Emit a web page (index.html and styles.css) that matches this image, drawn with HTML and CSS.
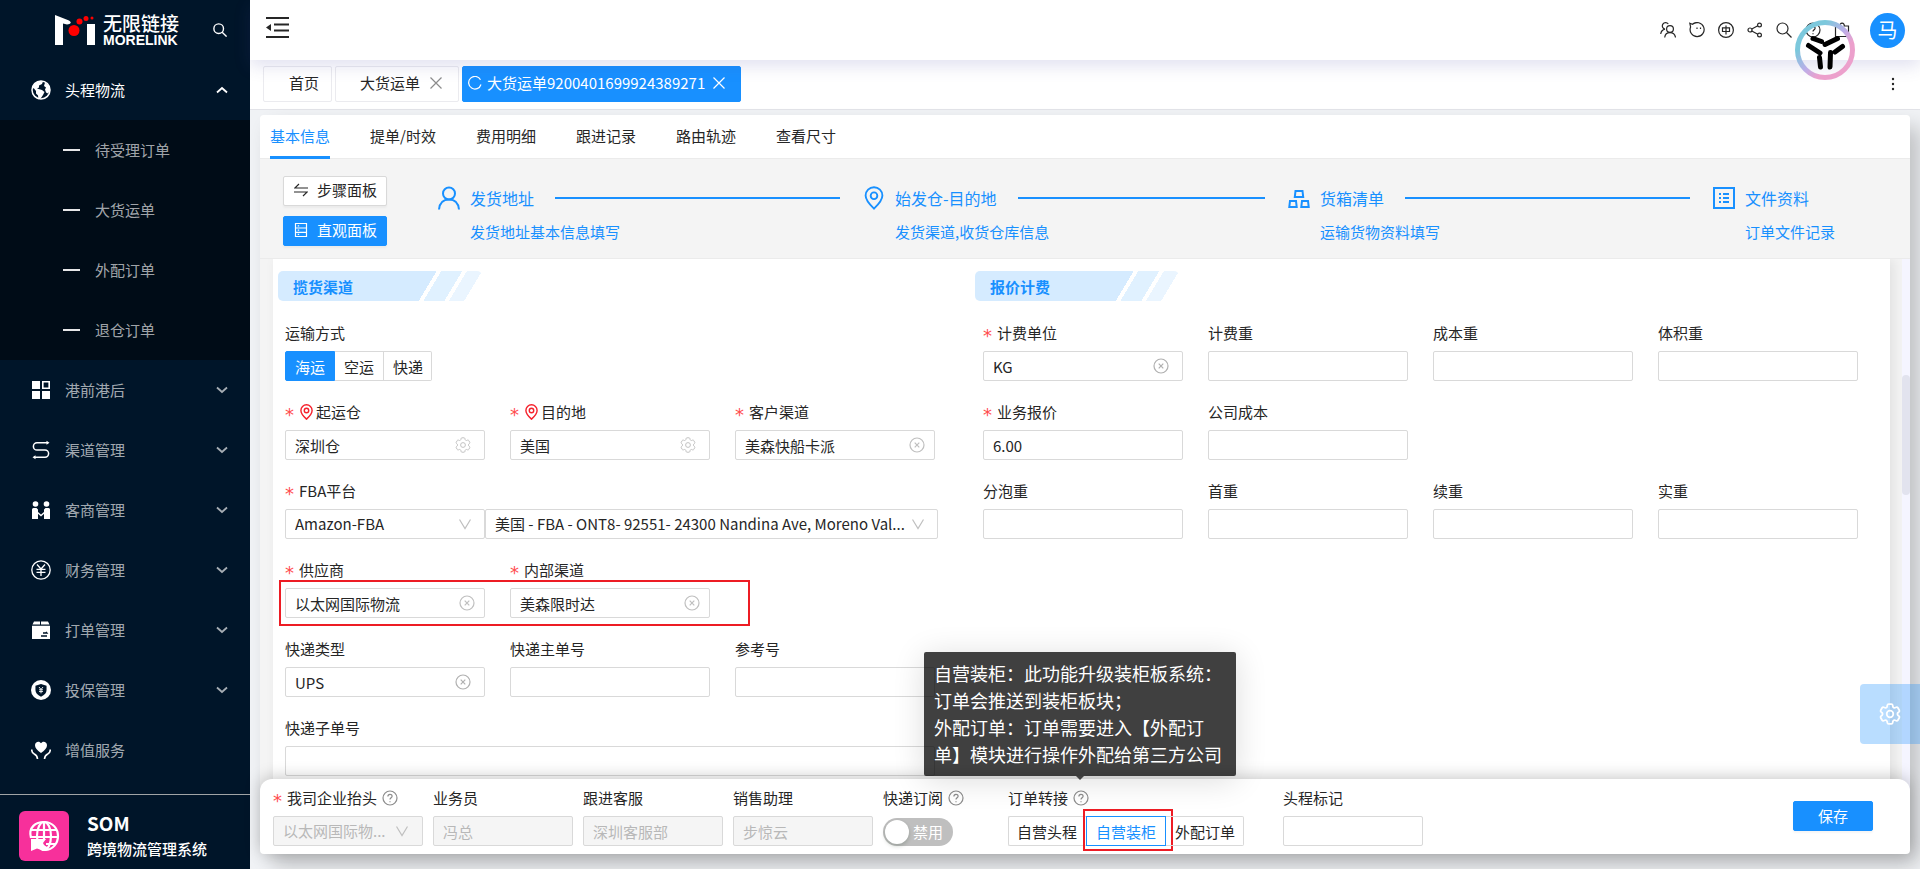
FILE: index.html
```html
<!DOCTYPE html>
<html lang="zh-CN">
<head>
<meta charset="utf-8">
<title>大货运单</title>
<link rel="stylesheet" href="styles.css">
</head>
<body>
<svg class="sprite" aria-hidden="true">
  <symbol id="i-search" viewBox="0 0 16 16"><circle cx="6.5" cy="6.5" r="5.5"/><path d="M10.500 10.500 15.500 15.500"/></symbol>
  <symbol id="i-chevron" viewBox="0 0 12 12"><path d="M1 3.500 6 8l5-4.500"/></symbol>
  <symbol id="i-vee" viewBox="0 0 12 12"><path d="M.500 1.500 6 10.500l5.500-9"/></symbol>
  <symbol id="i-clear" viewBox="0 0 16 16"><circle cx="8" cy="8" r="7"/><path d="m5.7 5.7 4.6 4.6m0-4.6-4.6 4.6"/></symbol>
  <symbol id="i-help" viewBox="0 0 16 16"><circle cx="8" cy="8" r="7"/><path d="M5.9 6.5C5.9 3.6 10.1 3.7 10.1 6.3 10.1 7.8 8 7.9 8 9.6"/><path d="M8 11.2v1"/></symbol>
  <symbol id="i-pin" viewBox="0 0 16 18"><path d="M8 17C5 14.200 1.700 11 1.700 7.200a6.300 6.300 0 0 1 12.600 0C14.300 11 11 14.200 8 17z"/><circle cx="8" cy="7.300" r="2.500"/></symbol>
  <symbol id="i-x" viewBox="0 0 12 12"><path d="m.500.500 11 11M11.500.500l-11 11"/></symbol>
  <symbol id="i-gear" viewBox="2 2 20 20"><path d="M9.594 3.94c.09-.542.56-.94 1.11-.94h2.593c.55 0 1.02.398 1.11.94l.213 1.281c.063.374.313.686.645.87.074.04.147.083.22.127.324.196.72.257 1.075.124l1.217-.456a1.125 1.125 0 011.37.49l1.296 2.247a1.125 1.125 0 01-.26 1.431l-1.003.827c-.293.24-.438.613-.431.992a6.759 6.759 0 010 .255c-.007.378.138.75.43.99l1.005.828c.424.35.534.954.26 1.43l-1.298 2.247a1.125 1.125 0 01-1.369.491l-1.217-.456c-.355-.133-.75-.072-1.076.124a6.57 6.57 0 01-.22.128c-.331.183-.581.495-.644.869l-.213 1.28c-.09.543-.56.941-1.11.941h-2.594c-.55 0-1.02-.398-1.11-.94l-.213-1.281c-.062-.374-.312-.686-.644-.87a6.52 6.52 0 01-.22-.127c-.325-.196-.72-.257-1.076-.124l-1.217.456a1.125 1.125 0 01-1.369-.49l-1.297-2.247a1.125 1.125 0 01.26-1.431l1.004-.827c.292-.24.437-.613.43-.992a6.932 6.932 0 010-.255c.007-.378-.138-.75-.43-.99l-1.004-.828a1.125 1.125 0 01-.26-1.43l1.297-2.247a1.125 1.125 0 011.37-.491l1.216.456c.356.133.751.072 1.076-.124.072-.044.146-.087.22-.128.332-.183.582-.495.644-.869l.214-1.281z"/><circle cx="12" cy="12" r="3"/></symbol>
</svg>

<aside class="sidebar">
  <div class="brand">
    <svg class="brand-mark" viewBox="0 0 40 31" aria-hidden="true"><path d="M0 0 14 5.500C17 7.500 16 9 12 9.500L8 8.500V30H0zM32 9h8v21h-8z" fill="#fff"/><circle cx="19" cy="15.500" r="5.500" fill="#f00"/><circle cx="24.500" cy="6.500" r="3" fill="#f00"/><circle cx="31" cy="3.500" r="2.500" fill="#f00"/><circle cx="37" cy="3" r="1.500" fill="#f00"/></svg>
    <div class="brand-text"><span class="brand-cn">无限链接</span><span class="brand-en">MORELINK</span></div>
    <button class="icon-btn brand-search" aria-label="搜索"><svg class="s14"><use href="#i-search"/></svg></button>
  </div>
  <nav class="menu">
    <button class="menu-item open">
      <svg class="menu-icon" viewBox="0 0 20 20"><circle cx="10" cy="10" r="9" fill="none" stroke="#fff" stroke-width="1.500"/><path d="M1.500 8C2 4 5 1.500 9 1l3 .500-1 2.500-3 1.500v2l-2 1 5 1.500 2.500 2-1.500 3-2 3-2.500 1.500-.5-4-2-2V11L3 8.500zM14 2.500l4.500 4 .5 4-2 3-2-1-1-3 1-2-2-1.500z"/></svg>
      <span>头程物流</span><svg class="menu-arrow up"><use href="#i-chevron"/></svg>
    </button>
    <div class="submenu">
      <a class="sub-item" href="#">待受理订单</a>
      <a class="sub-item" href="#">大货运单</a>
      <a class="sub-item" href="#">外配订单</a>
      <a class="sub-item" href="#">退仓订单</a>
    </div>
    <button class="menu-item">
      <svg class="menu-icon" viewBox="0 0 20 20"><path d="M1 1h8v8H1zM1 11h8v8H1zM11 11h8v8h-8z"/><path d="M11.800 1.800h6.400v6.400h-6.400z" fill="none" stroke="#fff" stroke-width="1.600"/></svg>
      <span>港前港后</span><svg class="menu-arrow"><use href="#i-chevron"/></svg>
    </button>
    <button class="menu-item">
      <svg class="menu-icon" viewBox="0 0 20 20"><path d="M17 2.800H6a3.600 3.600 0 0 0 0 7.200h8a3.600 3.600 0 0 1 0 7.200H3" fill="none" stroke="#fff" stroke-width="1.500"/><path d="m15.500.800 3 2-3 2zM4.500 15.200l-3 2 3 2z"/></svg>
      <span>渠道管理</span><svg class="menu-arrow"><use href="#i-chevron"/></svg>
    </button>
    <button class="menu-item">
      <svg class="menu-icon" viewBox="0 0 20 20"><circle cx="4.500" cy="4" r="2.800"/><circle cx="15.500" cy="4" r="2.800"/><path d="M1 9.500Q1 8 2.500 8h3L7 9.500V19H1zM19 9.500Q19 8 17.500 8h-3L13 9.500V19h6z"/><path d="m6 12 4 3.500 4-3.500" fill="none" stroke="#fff" stroke-width="1.400"/></svg>
      <span>客商管理</span><svg class="menu-arrow"><use href="#i-chevron"/></svg>
    </button>
    <button class="menu-item">
      <svg class="menu-icon" viewBox="0 0 20 20"><g fill="none" stroke="#fff" stroke-width="1.300"><circle cx="10" cy="10" r="9.200"/><path d="m6 4.500 4 4.500 4-4.500M5.500 9.300h9M5.500 12.300h9M10 9v7"/></g></svg>
      <span>财务管理</span><svg class="menu-arrow"><use href="#i-chevron"/></svg>
    </button>
    <button class="menu-item">
      <svg class="menu-icon" viewBox="0 0 20 20"><path d="M3 1.500h6v3H1.500zM10 1.500h7l1.500 3H10zM1 5.700h18V19H1z"/><path d="M12 13h4l-1-1.200M10 16h6" fill="none" stroke="#001529" stroke-width="1.300"/></svg>
      <span>打单管理</span><svg class="menu-arrow"><use href="#i-chevron"/></svg>
    </button>
    <button class="menu-item">
      <svg class="menu-icon" viewBox="1 1 18 18"><circle cx="10" cy="10" r="9"/><path d="m10 4.500 5 1.700V10q0 3.800-5 6-5-2.200-5-6V6.200z" fill="#001529"/><path d="m8.200 7.300 1.800 2.200 1.800-2.200M8.200 9.800h3.600M8.200 11.400h3.600M10 9.500V13" fill="none" stroke="#fff" stroke-width=".8"/></svg>
      <span>投保管理</span><svg class="menu-arrow"><use href="#i-chevron"/></svg>
    </button>
    <button class="menu-item">
      <svg class="menu-icon" viewBox="0 0 20 20"><path d="M10 13C6 10 4 8 4 5.200 4 1.500 8.500.500 10 3.300 11.500.500 16 1.500 16 5.200 16 8 14 10 10 13z"/><path d="M.800 9.500q-.3 3 2.500 4.500 3 1.500 3.200 5M19.200 9.500q.3 3-2.500 4.500-3 1.500-3.200 5" fill="none" stroke="#fff" stroke-width="1.600"/></svg>
      <span>增值服务</span>
    </button>
  </nav>
  <div class="system">
    <svg class="system-logo" viewBox="0 0 50 50" aria-hidden="true"><rect width="50" height="50" rx="6" fill="#f7309b"/><g fill="none" stroke="#fff" stroke-width="2.200"><path d="M12 27C9 16 17 11 25 11c9 0 14 7 14 14s-5 14-13 14"/><ellipse cx="25" cy="25" rx="7" ry="14"/><path d="M25 11v18M12 19h26M11 26h28M27 33h10"/></g><path d="M12 28h15l-3 4q1 3 6 4.500-5 4-12 1L12 40z" fill="#fff"/></svg>
    <div class="system-text"><strong>SOM</strong><span>跨境物流管理系统</span></div>
  </div>
</aside>

<main class="main">
  <header class="topbar">
    <button class="icon-btn" aria-label="收起菜单"><svg class="fold" viewBox="0 0 23 21"><path d="M0 1h23M8 7.500h15M8 13.500h15M0 20h23" stroke="#262626" stroke-width="2"/><path d="M5 7v7L0 10.500z" fill="#262626" stroke="none"/></svg></button>
    <div class="top-icons">
      <button class="icon-btn" aria-label="客户"><svg class="s16" viewBox="0 0 16 16"><circle cx="10" cy="7" r="3.400"/><path d="M4.700 15.500q.5-4.800 5.300-4.800t5.500 4.800M8.300 2A3.300 3.300 0 1 0 5 7.200Q1.300 8 .700 12"/></svg></button>
      <button class="icon-btn" aria-label="消息"><svg class="s16" viewBox="0 0 16 16"><path d="M.800 1.200 3.500 2.300A7 7 0 1 1 1.600 5z"/><path d="M8 5.500v1.600M11.500 5.500v1.600"/></svg></button>
      <button class="icon-btn" aria-label="语言"><svg class="s16" viewBox="0 0 16 16"><circle cx="8" cy="8" r="7.400"/><path d="M4.500 5.800h7v3.700h-7zM8 3.500v9"/></svg></button>
      <button class="icon-btn" aria-label="分享"><svg class="s16" viewBox="0 0 16 16"><circle cx="3" cy="8" r="2"/><circle cx="12.500" cy="3" r="1.900"/><circle cx="12.500" cy="13" r="1.900"/><path d="m4.800 7 6-3.200M4.800 9l6 3.200"/></svg></button>
      <button class="icon-btn" aria-label="搜索"><svg class="s16"><use href="#i-search"/></svg></button>
      <button class="icon-btn" aria-label="帮助"><svg class="s16"><use href="#i-help"/></svg></button>
      <button class="icon-btn" aria-label="应用"><svg class="s16" viewBox="0 0 16 16"><path d="M1.500 4H6a2.200 2.200 0 1 1 4.200 0h4.300v10.500h-13z"/></svg></button>
    </div>
    <span class="avatar">马</span>
    <svg class="float-logo" viewBox="0 0 60 60" aria-hidden="true"><defs><linearGradient id="ring" x1=".15" y1=".15" x2=".85" y2=".85"><stop offset=".15" stop-color="#7cc8dc"/><stop offset=".5" stop-color="#bcaee8"/><stop offset=".75" stop-color="#eca0cc"/></linearGradient></defs><circle cx="30" cy="30" r="27.500" fill="none" stroke="url(#ring)" stroke-width="5"/><path class="float-strokes" d="m18 18.500 8.500 3M42.500 18.500 30 24.500M13.500 25.500 25 33M47.500 26.500 40 32M24.500 37.500l1 9.500M35.500 32.500 35 47"/></svg>
  </header>

  <div class="tabs-bar">
    <div class="page-tab"><a href="#">首页</a></div>
    <div class="page-tab closable"><a href="#">大货运单</a><button class="icon-btn" aria-label="关闭"><svg class="s12"><use href="#i-x"/></svg></button></div>
    <div class="page-tab active"><svg class="s14" viewBox="0 0 14 14"><path d="M12.500 3.700A6.300 6.300 0 1 0 13 8.500"/></svg><a href="#">大货运单9200401699924389271</a><button class="icon-btn" aria-label="关闭"><svg class="s12"><use href="#i-x"/></svg></button></div>
    <button class="icon-btn more" aria-label="更多"><svg viewBox="0 0 4 14"><circle cx="2" cy="2" r="1.200"/><circle cx="2" cy="7" r="1.200"/><circle cx="2" cy="12" r="1.200"/></svg></button>
  </div>

  <div class="card">
    <nav class="inner-tabs">
      <a class="current" href="#">基本信息</a><a href="#">提单/时效</a><a href="#">费用明细</a><a href="#">跟进记录</a><a href="#">路由轨迹</a><a href="#">查看尺寸</a>
    </nav>
    <div class="band">
      <div class="band-buttons">
        <button class="btn"><svg class="s14" viewBox="0 0 14 14"><path d="M14 5H.800L5 1M0 9h13.200L9 13"/></svg>步骤面板</button>
        <button class="btn primary"><svg class="s14" viewBox="0 0 14 14"><path d="M1.500.500h11v13h-11zM1.500 5h11M1.500 9.300h11M3.700 2.800h1.500M3.700 7.100h1.500M3.700 11.400h1.500"/></svg>直观面板</button>
      </div>
      <ol class="steps">
        <li class="step"><svg viewBox="0 0 22 24"><circle cx="11" cy="7.500" r="6"/><path d="M1 23.500q1-10 10-10t10 10"/></svg><div class="step-body"><div class="step-title">发货地址</div><div class="step-desc">发货地址基本信息填写</div></div></li>
        <li class="step"><svg viewBox="0 0 16 18" class="thin"><use href="#i-pin"/></svg><div class="step-body"><div class="step-title">始发仓-目的地</div><div class="step-desc">发货渠道,收货仓库信息</div></div></li>
        <li class="step"><svg viewBox="0 0 22 24"><path d="M7.500 5h7l.7 6H6.800zM2 15h6l.7 6H1.300zM14 15h6l.7 6h-7.400z"/></svg><div class="step-body"><div class="step-title">货箱清单</div><div class="step-desc">运输货物资料填写</div></div></li>
        <li class="step last"><svg viewBox="0 0 22 24"><path d="M1 2h20v20H1zM6 8h2M10 8h6M6 12h2M10 12h6M6 16h2M10 16h6"/></svg><div class="step-body"><div class="step-title">文件资料</div><div class="step-desc">订单文件记录</div></div></li>
      </ol>
    </div>

    <div class="scroller">
      <form class="form">
        <section class="section pickup">
          <h2 class="section-head"><span>揽货渠道</span></h2>
          <div class="fields">
            <fieldset class="field wide">
              <legend class="label">运输方式</legend>
              <div class="segment solid">
                <label><input type="radio" name="mode" checked><span>海运</span></label>
                <label><input type="radio" name="mode"><span>空运</span></label>
                <label><input type="radio" name="mode"><span>快递</span></label>
              </div>
            </fieldset>
            <div class="field"><label class="label" for="f1"><i class="req">*</i><svg class="pin"><use href="#i-pin"/></svg>起运仓</label><div class="control"><input id="f1" value="深圳仓"><svg class="s16"><use href="#i-gear"/></svg></div></div>
            <div class="field"><label class="label" for="f2"><i class="req">*</i><svg class="pin"><use href="#i-pin"/></svg>目的地</label><div class="control"><input id="f2" value="美国"><svg class="s16"><use href="#i-gear"/></svg></div></div>
            <div class="field"><label class="label" for="f3"><i class="req">*</i>客户渠道</label><div class="control near"><input id="f3" value="美森快船卡派"><svg class="s16"><use href="#i-clear"/></svg></div></div>
            <div class="field wide">
              <label class="label" for="f4"><i class="req">*</i>FBA平台</label>
              <div class="pair">
                <div class="control"><select id="f4"><option>Amazon-FBA</option></select><svg class="s12"><use href="#i-vee"/></svg></div>
                <div class="control"><select aria-label="FBA仓库"><option>美国 - FBA - ONT8- 92551- 24300 Nandina Ave, Moreno Val...</option></select><svg class="s12"><use href="#i-vee"/></svg></div>
              </div>
            </div>
            <div class="wide supplier">
              <div class="field"><label class="label" for="f5"><i class="req">*</i>供应商</label><div class="control near"><input id="f5" value="以太网国际物流"><svg class="s16"><use href="#i-clear"/></svg></div></div>
              <div class="field"><label class="label" for="f6"><i class="req">*</i>内部渠道</label><div class="control near"><input id="f6" value="美森限时达"><svg class="s16"><use href="#i-clear"/></svg></div></div>
            </div>
            <div class="field"><label class="label" for="f7">快递类型</label><div class="control"><input id="f7" value="UPS"><svg class="s16 dark"><use href="#i-clear"/></svg></div></div>
            <div class="field"><label class="label" for="f8">快递主单号</label><div class="control"><input id="f8"></div></div>
            <div class="field"><label class="label" for="f9">参考号</label><div class="control"><input id="f9"></div></div>
            <div class="field wide"><label class="label" for="f10">快递子单号</label><div class="control"><input id="f10"></div></div>
          </div>
        </section>
        <section class="section quote">
          <h2 class="section-head"><span>报价计费</span></h2>
          <div class="fields">
            <div class="field"><label class="label" for="q1"><i class="req">*</i>计费单位</label><div class="control"><input id="q1" value="KG"><svg class="s16 dark"><use href="#i-clear"/></svg></div></div>
            <div class="field"><label class="label" for="q2">计费重</label><div class="control"><input id="q2"></div></div>
            <div class="field"><label class="label" for="q3">成本重</label><div class="control"><input id="q3"></div></div>
            <div class="field"><label class="label" for="q4">体积重</label><div class="control"><input id="q4"></div></div>
            <div class="field"><label class="label" for="q5"><i class="req">*</i>业务报价</label><div class="control"><input id="q5" value="6.00"></div></div>
            <div class="field"><label class="label" for="q6">公司成本</label><div class="control"><input id="q6"></div></div>
            <div class="field row-start"><label class="label" for="q7">分泡重</label><div class="control"><input id="q7"></div></div>
            <div class="field"><label class="label" for="q8">首重</label><div class="control"><input id="q8"></div></div>
            <div class="field"><label class="label" for="q9">续重</label><div class="control"><input id="q9"></div></div>
            <div class="field"><label class="label" for="q10">实重</label><div class="control"><input id="q10"></div></div>
          </div>
        </section>
      </form>
      <div class="track"><div class="thumb"></div></div>
    </div>

    <footer class="footer">
      <div class="footer-fields">
        <div class="field"><label class="label" for="b1"><i class="req">*</i>我司企业抬头<svg class="s16 help"><use href="#i-help"/></svg></label><div class="control disabled"><select id="b1" disabled><option>以太网国际物...</option></select><svg class="s12"><use href="#i-vee"/></svg></div></div>
        <div class="field"><label class="label" for="b2">业务员</label><div class="control disabled"><input id="b2" value="冯总" disabled></div></div>
        <div class="field"><label class="label" for="b3">跟进客服</label><div class="control disabled"><input id="b3" value="深圳客服部" disabled></div></div>
        <div class="field"><label class="label" for="b4">销售助理</label><div class="control disabled"><input id="b4" value="步惊云" disabled></div></div>
        <div class="field"><label class="label" for="b5">快递订阅<svg class="s16 help"><use href="#i-help"/></svg></label><label class="switch"><input id="b5" type="checkbox" role="switch"><span>禁用</span></label></div>
        <fieldset class="field">
          <legend class="label">订单转接<span class="tip-anchor"><svg class="s16 help"><use href="#i-help"/></svg><span class="tooltip" role="tooltip">自营装柜：此功能升级装柜板系统：<br>订单会推送到装柜板块；<br>外配订单：订单需要进入【外配订单】模块进行操作外配给第三方公司</span></span></legend>
          <div class="segment outline">
            <label><input type="radio" name="transfer"><span>自营头程</span></label>
            <label class="marked"><input type="radio" name="transfer" checked><span>自营装柜</span></label>
            <label><input type="radio" name="transfer"><span>外配订单</span></label>
          </div>
        </fieldset>
        <div class="field"><label class="label" for="b7">头程标记</label><div class="control"><input id="b7"></div></div>
      </div>
      <button class="btn primary save">保存</button>
    </footer>
  </div>
</main>
<button class="settings" aria-label="设置"><svg><use href="#i-gear"/></svg></button>
</body>
</html>
```
FILE: styles.css
```css
* { box-sizing: border-box; }

body {
  margin: 0;
  height: 100vh;
  display: flex;
  overflow: hidden;
  background: #f0f2f5;
  color: #262626;
  font: 400 15px/24px "Noto Sans CJK SC", "Noto Sans", sans-serif;
}

button, input, select { font: inherit; color: inherit; }
button { cursor: pointer; }
a { color: inherit; text-decoration: none; }
svg { display: block; flex: none; fill: none; stroke: currentColor; stroke-width: 1.2; }
fieldset { border: 0; margin: 0; padding: 0; min-width: 0; }
legend { padding: 0; }

.sprite { position: absolute; width: 0; height: 0; }
.s12 { width: 12px; height: 12px; }
.s14 { width: 14px; height: 14px; }
.s16 { width: 16px; height: 16px; }
.icon-btn { display: flex; padding: 0; border: 0; background: none; }

/* Sidebar */
.sidebar {
  flex: none;
  width: 250px;
  display: flex;
  flex-direction: column;
  background: #001529;
  color: #fff;
}
.brand {
  height: 60px;
  display: flex;
  align-items: center;
  padding: 0 23px 0 55px;
}
.brand-mark { width: 40px; height: 31px; stroke: none; }
.brand-text { display: flex; flex-direction: column; margin-left: 8px; }
.brand-cn { font-size: 19px; font-weight: 500; line-height: 20px; }
.brand-en { font: bold 14px/14px "Liberation Sans", sans-serif; }
.brand-search { margin-left: auto; color: #fff; }
.brand-search svg { stroke-width: 1.6; }
.menu { flex: 1; }
.menu-item {
  width: 100%;
  height: 60px;
  display: flex;
  align-items: center;
  padding: 0 22px 0 31px;
  border: 0;
  background: none;
  color: rgba(255, 255, 255, .65);
}
.menu-item.open { color: #fff; }
.menu-icon { width: 20px; height: 20px; margin-right: 14px; fill: #fff; stroke: none; }
.menu-arrow { width: 12px; height: 12px; margin-left: auto; stroke-width: 1.8; }
.menu-arrow.up { transform: rotate(180deg); }
.submenu { background: #000c17; }
.sub-item {
  height: 60px;
  display: flex;
  align-items: center;
  padding-left: 63px;
  color: rgba(255, 255, 255, .65);
}
.sub-item::before { content: ""; width: 17px; height: 2px; margin-right: 15px; background: #e6e7e8; }
.system {
  height: 75px;
  display: flex;
  align-items: center;
  gap: 18px;
  padding: 8px 19px 0;
  border-top: 1px solid #a0a4a6;
}
.system-logo { width: 50px; height: 50px; stroke: none; }
.system-text { display: flex; flex-direction: column; gap: 2px; }
.system-text strong { font-size: 19px; font-weight: 700; }
.system-text span { font-weight: 500; }

/* Header */
.main { flex: 1; min-width: 0; display: flex; flex-direction: column; }
.topbar {
  position: relative;
  z-index: 2;
  flex: none;
  height: 60px;
  display: flex;
  align-items: center;
  padding: 0 15px 0 16px;
  background: #fff;
  box-shadow: 0 6px 16px rgba(70, 70, 160, .16);
}
.fold { width: 23px; height: 21px; margin-bottom: 5px; }
.top-icons { display: flex; gap: 13px; margin: 0 20px 0 auto; }
.avatar {
  width: 35px;
  height: 35px;
  border-radius: 50%;
  background: #1890ff;
  color: #fff;
  font-size: 20px;
  line-height: 34px;
  text-align: center;
}
.float-logo { position: absolute; top: 20px; right: 65px; width: 60px; height: 60px; stroke: none; }
.float-strokes { stroke: #000; stroke-width: 5; stroke-linecap: round; }

.tabs-bar {
  flex: none;
  height: 50px;
  display: flex;
  align-items: center;
  gap: 3px;
  padding: 0 25px 2px 13px;
  background: #fff;
  border-bottom: 1px solid #e2e3e8;
}
.page-tab {
  height: 36px;
  display: flex;
  align-items: center;
  padding: 0 12px 2px 25px;
  border: 1px solid #ebebef;
  border-radius: 2px;
}
.page-tab.closable { padding-right: 16px; padding-left: 24px; gap: 10px; }
.page-tab.closable .icon-btn { color: #8c8c8c; }
.page-tab.active {
  gap: 5px;
  padding: 0 15px 2px 5px;
  background: #1890ff;
  border-color: #1890ff;
  color: #fff;
}
.page-tab.active .icon-btn { color: #fff; margin-left: 3px; }
.more { margin-left: auto; }
.more svg { width: 4px; height: 14px; fill: #262626; stroke: none; }

/* Card */
.card {
  flex: 1;
  min-height: 0;
  margin: 5px 10px 15px;
  display: flex;
  flex-direction: column;
  border-radius: 4px 4px 12px 12px;
  background: #f4f4f4;
  box-shadow: 10px 12px 20px rgba(0, 0, 0, .2);
}
.inner-tabs {
  flex: none;
  height: 44px;
  display: flex;
  gap: 40px;
  padding: 0 10px;
  background: #fff;
  border-bottom: 1px solid #ebebeb;
  border-radius: 4px 4px 0 0;
}
.inner-tabs a { height: 44px; padding-top: 9px; border-bottom: 3px solid transparent; }
.inner-tabs .current { color: #1890ff; border-color: #1890ff; }

.band {
  flex: none;
  height: 100px;
  display: flex;
  gap: 51px;
  padding: 17px 74px 0 23px;
  border-bottom: 1px solid #ebebeb;
}
.band-buttons { display: flex; flex-direction: column; gap: 10px; }
.btn {
  height: 30px;
  display: flex;
  align-items: center;
  gap: 9px;
  padding: 0 9px 2px 10px;
  border: 1px solid #d9d9d9;
  border-radius: 2px;
  background: #fff;
  box-shadow: 0 2px 2px rgba(0, 0, 0, .04);
}
.btn.primary { background: #1890ff; border-color: #1890ff; color: #fff; }
.steps { flex: 1; display: flex; margin: 10px 0 0; padding: 0; list-style: none; color: #1890ff; }
.step { flex: 1; display: flex; gap: 10px; }
.step svg { width: 22px; height: 24px; stroke-width: 2; }
.step svg.thin { stroke-width: 1.4; }
.step.last { flex: none; width: 123px; }
.step-body { flex: 1; }
.step-title { display: flex; align-items: center; font-size: 16px; }
.step:not(.last) .step-title::after { content: ""; flex: 1; height: 2px; margin: 0 23px 0 21px; background: #1890ff; }
.step-desc { margin-top: 10px; white-space: nowrap; }

/* Form */
.scroller { flex: 1; min-height: 0; display: flex; overflow: hidden; padding-left: 13px; margin-bottom: -12px; }
.form {
  flex: 1;
  display: grid;
  grid-template-columns: 697fr 920fr;
  margin-right: 12px;
  background: #fff;
  box-shadow: 4px 0 12px rgba(0, 0, 0, .08);
}
.track { width: 8px; padding-top: 116px; background: #f5f5ff; }
.thumb { height: 120px; border-radius: 4px; background: #e2e3ee; }
.section { min-width: 0; padding: 12px 0 0 5px; }
.section-head {
  width: 204px;
  height: 30px;
  margin: 0 0 20px;
  padding-left: 15px;
  border-radius: 5px;
  font-size: 15px;
  line-height: 32px;
  color: #1890ff;
  background: linear-gradient(121deg, #d5ebff 0 136px, #fff 136px 140px, #e0f1ff 140px 158px, #fff 158px 162px, #eaf5ff 162px 175px, #fff 175px);
}
.fields { display: grid; column-gap: 25px; row-gap: 19px; }
.pickup .fields { grid-template-columns: repeat(3, 1fr); padding: 0 35px 0 7px; }
.quote .fields { grid-template-columns: repeat(4, 1fr); padding: 0 32px 0 8px; }
.field { min-width: 0; }
.wide { grid-column: 1 / -1; }
.row-start { grid-column: 1; }
.label { display: flex; align-items: center; height: 24px; margin-bottom: 6px; white-space: nowrap; }
.req {
  width: 9px;
  margin-right: 5px;
  padding-top: 6px;
  font: normal 18px/18px "DejaVu Sans", sans-serif;
  color: #ff4d4f;
}
.pin { width: 15px; height: 16px; margin-right: 2px; color: #f5222d; stroke-width: 1.6; }
.help { margin-left: 5px; color: #8c8c8c; }
.control {
  height: 30px;
  display: flex;
  align-items: center;
  padding: 0 13px 0 9px;
  border: 1px solid #d9d9d9;
  border-radius: 2px;
  background: #fff;
}
.control.near { padding-right: 9px; }
.control input, .control select {
  flex: 1;
  min-width: 0;
  width: 100%;
  height: 28px;
  padding: 0;
  border: 0;
  outline: 0;
  background: none;
  appearance: none;
  text-overflow: ellipsis;
}
.control svg { color: #bfbfbf; }
.control svg.dark { color: #b0b0b0; }
.control.disabled { background: #f5f5f5; padding-right: 14px; }
.control :disabled { color: #b8b8b8; opacity: 1; }
.pair { display: flex; }
.pair .control:first-child { flex: none; width: 200px; }
.pair .control:last-child { flex: 1; min-width: 0; margin-right: -3px; }
.supplier { position: relative; display: grid; grid-template-columns: repeat(3, 1fr); column-gap: 25px; }
.supplier::after {
  content: "";
  position: absolute;
  left: -6px;
  right: 185px;
  bottom: -8px;
  height: 42px;
  border: 2px solid #ed1c24;
  pointer-events: none;
}

.segment { display: flex; }
.segment label { position: relative; }
.segment input, .switch input { position: absolute; opacity: 0; margin: 0; }
.segment span {
  height: 30px;
  display: block;
  padding: 0 9px;
  border: 1px solid #d9d9d9;
  border-left-width: 0;
  line-height: 29px;
}
.segment label:first-child span { border-left-width: 1px; border-radius: 2px 0 0 2px; }
.segment label:last-child span { border-radius: 0 2px 2px 0; padding-right: 8px; }
.solid input:checked + span { background: #1890ff; border-color: #1890ff; color: #fff; }
.outline input:checked + span { border: 1px solid #1890ff; color: #1890ff; }
.outline label:first-child span { border-right-width: 0; padding-left: 8px; }
.marked::after {
  content: "";
  position: absolute;
  inset: -7px -7px -5px -3px;
  border: 2px solid #ed1c24;
  pointer-events: none;
}

/* Action bar */
.footer {
  position: relative;
  z-index: 1;
  flex: none;
  display: flex;
  align-items: center;
  justify-content: space-between;
  padding: 7px 37px 8px 13px;
  border-radius: 12px 12px 4px 4px;
  background: #fff;
  box-shadow: 0 -2px 16px rgba(0, 0, 0, .22);
}
.footer-fields { display: grid; grid-template-columns: 150px repeat(3, 140px) 115px 265px 140px; column-gap: 10px; }
.switch {
  position: relative;
  display: flex;
  width: 70px;
  height: 28px;
  margin-top: 8px;
  padding-left: 2px;
  align-items: center;
  border-radius: 14px;
  background: #bfbfbf;
  color: #fff;
}
.switch::before {
  content: "";
  width: 24px;
  height: 24px;
  margin-right: 4px;
  border-radius: 50%;
  background: #fff;
  box-shadow: 0 2px 4px rgba(0, 35, 11, .2);
}
.save { width: 80px; justify-content: center; padding: 0; }
.tip-anchor { position: relative; }
.tooltip {
  position: absolute;
  left: 12px;
  bottom: 30px;
  width: 312px;
  padding: 8px 10px;
  transform: translateX(-50%);
  border-radius: 2px;
  background: rgba(0, 0, 0, .75);
  box-shadow: 0 4px 32px rgba(0, 0, 0, .14);
  color: #fff;
  font-size: 18px;
  line-height: 27px;
  white-space: normal;
}
.tooltip::after {
  content: "";
  position: absolute;
  top: 100%;
  left: 50%;
  margin-left: -4px;
  border: 4px solid transparent;
  border-top-color: #404040;
}

.settings {
  position: fixed;
  z-index: 3;
  right: 0;
  top: 684px;
  width: 60px;
  height: 60px;
  display: flex;
  align-items: center;
  justify-content: center;
  border: 0;
  border-radius: 4px 0 0 4px;
  background: rgba(24, 144, 255, .3);
  color: #fff;
}
.settings svg { width: 22px; height: 22px; stroke-width: 1.6; }
```
